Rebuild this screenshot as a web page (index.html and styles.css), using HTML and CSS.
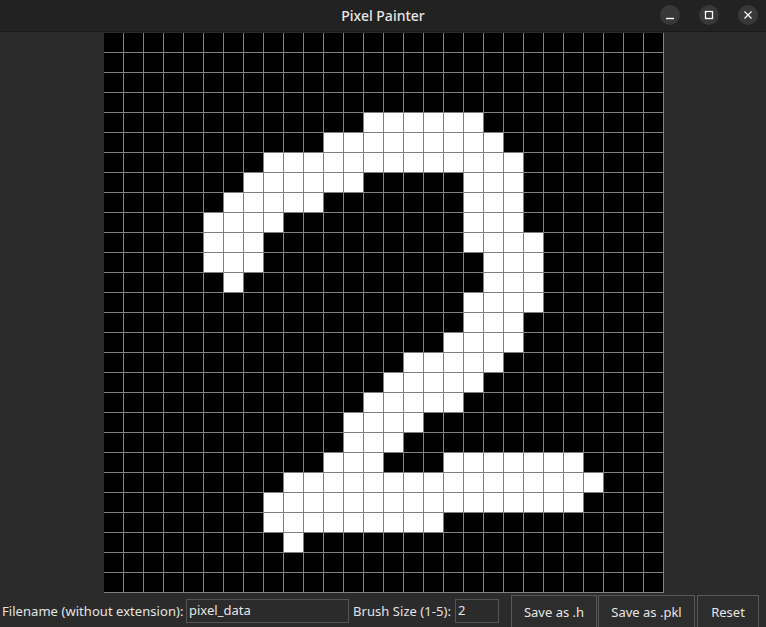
FILE: index.html
```html
<!DOCTYPE html>
<html>
<head>
<meta charset="utf-8">
<title>Pixel Painter</title>
<link rel="stylesheet" href="styles.css">
</head>
<body>
<div class="window">
  <header class="titlebar">
    <span class="title">Pixel Painter</span>
    <div class="controls">
      <span class="ctl"><svg width="20" height="20" viewBox="0 0 20 20"><line x1="6" y1="13.5" x2="14" y2="13.5" stroke="#ffffff" stroke-width="1.4"/></svg></span>
      <span class="ctl"><svg width="20" height="20" viewBox="0 0 20 20"><rect x="6.5" y="6.5" width="7" height="7" fill="none" stroke="#ffffff" stroke-width="1.3"/></svg></span>
      <span class="ctl"><svg width="20" height="20" viewBox="0 0 20 20"><path d="M6.5 6.5 L13.5 13.5 M13.5 6.5 L6.5 13.5" stroke="#ffffff" stroke-width="1.3"/></svg></span>
    </div>
  </header>
  <main class="body">
    <div class="canvas" id="canvas">
      <!-- rows 0-3 -->
      <i></i><i></i><i></i><i></i><i></i><i></i><i></i><i></i><i></i><i></i><i></i><i></i><i></i><i></i><i></i><i></i><i></i><i></i><i></i><i></i><i></i><i></i><i></i><i></i><i></i><i></i><i></i><i></i>
      <i></i><i></i><i></i><i></i><i></i><i></i><i></i><i></i><i></i><i></i><i></i><i></i><i></i><i></i><i></i><i></i><i></i><i></i><i></i><i></i><i></i><i></i><i></i><i></i><i></i><i></i><i></i><i></i>
      <i></i><i></i><i></i><i></i><i></i><i></i><i></i><i></i><i></i><i></i><i></i><i></i><i></i><i></i><i></i><i></i><i></i><i></i><i></i><i></i><i></i><i></i><i></i><i></i><i></i><i></i><i></i><i></i>
      <i></i><i></i><i></i><i></i><i></i><i></i><i></i><i></i><i></i><i></i><i></i><i></i><i></i><i></i><i></i><i></i><i></i><i></i><i></i><i></i><i></i><i></i><i></i><i></i><i></i><i></i><i></i><i></i>
      <!-- row 4: 13-18 -->
      <i></i><i></i><i></i><i></i><i></i><i></i><i></i><i></i><i></i><i></i><i></i><i></i><i></i><i class="w"></i><i class="w"></i><i class="w"></i><i class="w"></i><i class="w"></i><i class="w"></i><i></i><i></i><i></i><i></i><i></i><i></i><i></i><i></i><i></i>
      <!-- row 5: 11-19 -->
      <i></i><i></i><i></i><i></i><i></i><i></i><i></i><i></i><i></i><i></i><i></i><i class="w"></i><i class="w"></i><i class="w"></i><i class="w"></i><i class="w"></i><i class="w"></i><i class="w"></i><i class="w"></i><i class="w"></i><i></i><i></i><i></i><i></i><i></i><i></i><i></i><i></i>
      <!-- row 6: 8-20 -->
      <i></i><i></i><i></i><i></i><i></i><i></i><i></i><i></i><i class="w"></i><i class="w"></i><i class="w"></i><i class="w"></i><i class="w"></i><i class="w"></i><i class="w"></i><i class="w"></i><i class="w"></i><i class="w"></i><i class="w"></i><i class="w"></i><i class="w"></i><i></i><i></i><i></i><i></i><i></i><i></i><i></i>
      <!-- row 7: 7-12, 18-20 -->
      <i></i><i></i><i></i><i></i><i></i><i></i><i></i><i class="w"></i><i class="w"></i><i class="w"></i><i class="w"></i><i class="w"></i><i class="w"></i><i></i><i></i><i></i><i></i><i></i><i class="w"></i><i class="w"></i><i class="w"></i><i></i><i></i><i></i><i></i><i></i><i></i><i></i>
      <!-- row 8: 6-10, 18-20 -->
      <i></i><i></i><i></i><i></i><i></i><i></i><i class="w"></i><i class="w"></i><i class="w"></i><i class="w"></i><i class="w"></i><i></i><i></i><i></i><i></i><i></i><i></i><i></i><i class="w"></i><i class="w"></i><i class="w"></i><i></i><i></i><i></i><i></i><i></i><i></i><i></i>
      <!-- row 9: 5-8, 18-20 -->
      <i></i><i></i><i></i><i></i><i></i><i class="w"></i><i class="w"></i><i class="w"></i><i class="w"></i><i></i><i></i><i></i><i></i><i></i><i></i><i></i><i></i><i></i><i class="w"></i><i class="w"></i><i class="w"></i><i></i><i></i><i></i><i></i><i></i><i></i><i></i>
      <!-- row 10: 5-7, 18-21 -->
      <i></i><i></i><i></i><i></i><i></i><i class="w"></i><i class="w"></i><i class="w"></i><i></i><i></i><i></i><i></i><i></i><i></i><i></i><i></i><i></i><i></i><i class="w"></i><i class="w"></i><i class="w"></i><i class="w"></i><i></i><i></i><i></i><i></i><i></i><i></i>
      <!-- row 11: 5-7, 19-21 -->
      <i></i><i></i><i></i><i></i><i></i><i class="w"></i><i class="w"></i><i class="w"></i><i></i><i></i><i></i><i></i><i></i><i></i><i></i><i></i><i></i><i></i><i></i><i class="w"></i><i class="w"></i><i class="w"></i><i></i><i></i><i></i><i></i><i></i><i></i>
      <!-- row 12: 6, 19-21 -->
      <i></i><i></i><i></i><i></i><i></i><i></i><i class="w"></i><i></i><i></i><i></i><i></i><i></i><i></i><i></i><i></i><i></i><i></i><i></i><i></i><i class="w"></i><i class="w"></i><i class="w"></i><i></i><i></i><i></i><i></i><i></i><i></i>
      <!-- row 13: 18-21 -->
      <i></i><i></i><i></i><i></i><i></i><i></i><i></i><i></i><i></i><i></i><i></i><i></i><i></i><i></i><i></i><i></i><i></i><i></i><i class="w"></i><i class="w"></i><i class="w"></i><i class="w"></i><i></i><i></i><i></i><i></i><i></i><i></i>
      <!-- row 14: 18-20 -->
      <i></i><i></i><i></i><i></i><i></i><i></i><i></i><i></i><i></i><i></i><i></i><i></i><i></i><i></i><i></i><i></i><i></i><i></i><i class="w"></i><i class="w"></i><i class="w"></i><i></i><i></i><i></i><i></i><i></i><i></i><i></i>
      <!-- row 15: 17-20 -->
      <i></i><i></i><i></i><i></i><i></i><i></i><i></i><i></i><i></i><i></i><i></i><i></i><i></i><i></i><i></i><i></i><i></i><i class="w"></i><i class="w"></i><i class="w"></i><i class="w"></i><i></i><i></i><i></i><i></i><i></i><i></i><i></i>
      <!-- row 16: 15-19 -->
      <i></i><i></i><i></i><i></i><i></i><i></i><i></i><i></i><i></i><i></i><i></i><i></i><i></i><i></i><i></i><i class="w"></i><i class="w"></i><i class="w"></i><i class="w"></i><i class="w"></i><i></i><i></i><i></i><i></i><i></i><i></i><i></i><i></i>
      <!-- row 17: 14-18 -->
      <i></i><i></i><i></i><i></i><i></i><i></i><i></i><i></i><i></i><i></i><i></i><i></i><i></i><i></i><i class="w"></i><i class="w"></i><i class="w"></i><i class="w"></i><i class="w"></i><i></i><i></i><i></i><i></i><i></i><i></i><i></i><i></i><i></i>
      <!-- row 18: 13-17 -->
      <i></i><i></i><i></i><i></i><i></i><i></i><i></i><i></i><i></i><i></i><i></i><i></i><i></i><i class="w"></i><i class="w"></i><i class="w"></i><i class="w"></i><i class="w"></i><i></i><i></i><i></i><i></i><i></i><i></i><i></i><i></i><i></i><i></i>
      <!-- row 19: 12-15 -->
      <i></i><i></i><i></i><i></i><i></i><i></i><i></i><i></i><i></i><i></i><i></i><i></i><i class="w"></i><i class="w"></i><i class="w"></i><i class="w"></i><i></i><i></i><i></i><i></i><i></i><i></i><i></i><i></i><i></i><i></i><i></i><i></i>
      <!-- row 20: 12-14 -->
      <i></i><i></i><i></i><i></i><i></i><i></i><i></i><i></i><i></i><i></i><i></i><i></i><i class="w"></i><i class="w"></i><i class="w"></i><i></i><i></i><i></i><i></i><i></i><i></i><i></i><i></i><i></i><i></i><i></i><i></i><i></i>
      <!-- row 21: 11-13, 17-23 -->
      <i></i><i></i><i></i><i></i><i></i><i></i><i></i><i></i><i></i><i></i><i></i><i class="w"></i><i class="w"></i><i class="w"></i><i></i><i></i><i></i><i class="w"></i><i class="w"></i><i class="w"></i><i class="w"></i><i class="w"></i><i class="w"></i><i class="w"></i><i></i><i></i><i></i><i></i>
      <!-- row 22: 9-24 -->
      <i></i><i></i><i></i><i></i><i></i><i></i><i></i><i></i><i></i><i class="w"></i><i class="w"></i><i class="w"></i><i class="w"></i><i class="w"></i><i class="w"></i><i class="w"></i><i class="w"></i><i class="w"></i><i class="w"></i><i class="w"></i><i class="w"></i><i class="w"></i><i class="w"></i><i class="w"></i><i class="w"></i><i></i><i></i><i></i>
      <!-- row 23: 8-23 -->
      <i></i><i></i><i></i><i></i><i></i><i></i><i></i><i></i><i class="w"></i><i class="w"></i><i class="w"></i><i class="w"></i><i class="w"></i><i class="w"></i><i class="w"></i><i class="w"></i><i class="w"></i><i class="w"></i><i class="w"></i><i class="w"></i><i class="w"></i><i class="w"></i><i class="w"></i><i class="w"></i><i></i><i></i><i></i><i></i>
      <!-- row 24: 8-16 -->
      <i></i><i></i><i></i><i></i><i></i><i></i><i></i><i></i><i class="w"></i><i class="w"></i><i class="w"></i><i class="w"></i><i class="w"></i><i class="w"></i><i class="w"></i><i class="w"></i><i class="w"></i><i></i><i></i><i></i><i></i><i></i><i></i><i></i><i></i><i></i><i></i><i></i>
      <!-- row 25: 9 -->
      <i></i><i></i><i></i><i></i><i></i><i></i><i></i><i></i><i></i><i class="w"></i><i></i><i></i><i></i><i></i><i></i><i></i><i></i><i></i><i></i><i></i><i></i><i></i><i></i><i></i><i></i><i></i><i></i><i></i>
      <!-- rows 26-27 -->
      <i></i><i></i><i></i><i></i><i></i><i></i><i></i><i></i><i></i><i></i><i></i><i></i><i></i><i></i><i></i><i></i><i></i><i></i><i></i><i></i><i></i><i></i><i></i><i></i><i></i><i></i><i></i><i></i>
      <i></i><i></i><i></i><i></i><i></i><i></i><i></i><i></i><i></i><i></i><i></i><i></i><i></i><i></i><i></i><i></i><i></i><i></i><i></i><i></i><i></i><i></i><i></i><i></i><i></i><i></i><i></i><i></i>
    </div>
    <div class="toolbar">
      <label class="lbl lbl-file">Filename (without extension):</label>
      <div class="entry entry-file">pixel_data</div>
      <label class="lbl lbl-brush">Brush Size (1-5):</label>
      <div class="entry entry-brush">2</div>
      <div class="buttons">
        <button class="btn btn-h">Save as .h</button>
        <button class="btn btn-pkl">Save as .pkl</button>
        <button class="btn btn-reset">Reset</button>
      </div>
    </div>
  </main>
</div>
</body>
</html>
```

FILE: styles.css
```css
html, body {
  margin: 0;
  padding: 0;
  width: 766px;
  height: 627px;
  overflow: hidden;
  background: #2b2b2b;
  font-family: "Noto Sans", "Open Sans", sans-serif;
}

.window {
  width: 766px;
  height: 627px;
  display: flex;
  flex-direction: column;
  background: #2b2b2b;
}

.titlebar {
  position: relative;
  height: 31px;
  flex: none;
  background: #222222;
  border-bottom: 1px solid #191919;
  display: flex;
  align-items: center;
  justify-content: center;
}

.title {
  color: #e6e6e6;
  font-size: 14px;
  font-weight: 500;
  margin-top: -1px;
}

.controls {
  position: absolute;
  right: 8px;
  top: 5px;
  display: flex;
  gap: 19px;
}

.ctl {
  width: 20px;
  height: 20px;
  border-radius: 50%;
  background: #383838;
  display: block;
}

.ctl svg {
  display: block;
}

.body {
  flex: 1;
  display: flex;
  flex-direction: column;
  align-items: center;
  padding-top: 1px;
  padding-left: 2px;
}

.canvas {
  width: 560px;
  height: 560px;
  display: grid;
  grid-template-columns: repeat(28, 20px);
  grid-template-rows: repeat(28, 20px);
  background: #000000;
}

.canvas i {
  display: block;
  box-sizing: border-box;
  width: 20px;
  height: 20px;
  background: #000000;
  border-right: 1px solid #808080;
  border-bottom: 1px solid #808080;
}

.canvas i.w {
  background: #ffffff;
}

.toolbar {
  align-self: stretch;
  margin-left: -2px;
  display: flex;
  align-items: flex-start;
  margin-top: 2px;
  height: 34px;
  color: #e3e3e3;
  font-size: 13px;
}

.lbl {
  line-height: 18px;
  margin-top: 7px;
  white-space: nowrap;
  letter-spacing: 0.05px;
}

.lbl-file {
  margin-left: 2px;
  width: 182px;
}

.lbl-brush {
  margin-left: 4px;
  width: 100px;
}

.entry {
  box-sizing: border-box;
  height: 24px;
  margin-top: 4px;
  margin-left: 2px;
  border: 1px solid #555555;
  background: #2b2b2b;
  color: #e6e6e6;
  padding-left: 2px;
  line-height: 21px;
  white-space: nowrap;
}

.entry-file {
  width: 163px;
}

.entry-brush {
  width: 44px;
}

.buttons {
  display: flex;
  margin-left: 12px;
}

.btn {
  box-sizing: border-box;
  height: 34px;
  border: 1px solid #595959;
  background: #2d2d2d;
  color: #e6e6e6;
  font-family: "Noto Sans", "Open Sans", sans-serif;
  font-size: 13px;
  padding: 0;
  margin: 0;
  line-height: 30px;
}

.btn-h {
  width: 86px;
}

.btn-pkl {
  width: 97px;
  margin-left: 1px;
}

.btn-reset {
  width: 62px;
  margin-left: 2px;
}
```
